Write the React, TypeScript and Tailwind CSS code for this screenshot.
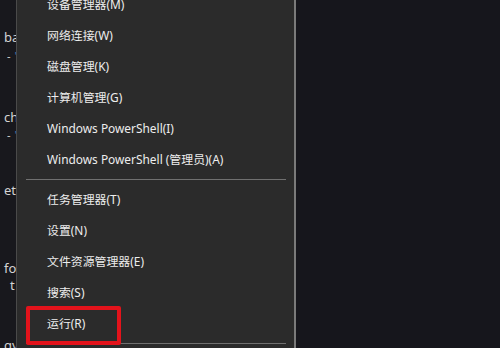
import React from 'react';

const topItems = [
  '设备管理器(M)',
  '网络连接(W)',
  '磁盘管理(K)',
  '计算机管理(G)',
  'Windows PowerShell(I)',
  'Windows PowerShell (管理员)(A)',
];

const bottomItems = ['任务管理器(T)', '设置(N)', '文件资源管理器(E)', '搜索(S)', '运行(R)'];

function MenuRow({ label }: { label: string }) {
  return (
    <div className="h-[31px] flex items-center pl-[30px] text-[11.9px] text-[#ededed] whitespace-nowrap">
      {label}
    </div>
  );
}

function Separator() {
  return <div className="ml-[9px] mr-[8px] my-[4px] h-px bg-[#707070]" />;
}

export default function App() {
  return (
    <div
      className="relative w-[500px] h-[348px] overflow-hidden flex bg-[#16161c]"
      style={{ fontFamily: '"Noto Sans", "Noto Sans CJK SC", sans-serif' }}
    >
      {/* editor text peeking out behind the menu */}
      <div className="w-[16px] shrink-0 bg-[#18181d] text-[13px] leading-none text-[#d4d4d4] pl-[4px] overflow-hidden">
        <div className="mt-[31px]">ba</div>
        <div className="mt-[6px] pl-[3px] flex gap-[4px] text-[11px]">
          -<span className="text-[#3b6fb0]">'</span>
        </div>
        <div className="mt-[50px]">ch</div>
        <div className="mt-[5px] pl-[3px] flex gap-[4px] text-[11px]">
          -<span className="text-[#3b6fb0]">'</span>
        </div>
        <div className="mt-[44px]">et</div>
        <div className="mt-[65px]">fo</div>
        <div className="mt-[4px] pl-[6px]">t</div>
        <div className="mt-[47px]">gv</div>
      </div>

      <div className="w-[280px] shrink-0 bg-[#2b2b2b] border-l border-[#4a4a4a] border-r-2 border-r-[#7a7a7a]">
        <div className="-mt-[11px]">
          {topItems.map((t) => (
            <MenuRow key={t} label={t} />
          ))}
        </div>
        <Separator />
        {bottomItems.map((t) => (
          <MenuRow key={t} label={t} />
        ))}
        <Separator />
      </div>

      <div className="flex-1 bg-[#16161c]" />

      <div className="absolute left-[26px] top-[306px] w-[95px] h-[39px] border-4 border-[#e3131b] rounded-[2px]" />
    </div>
  );
}
